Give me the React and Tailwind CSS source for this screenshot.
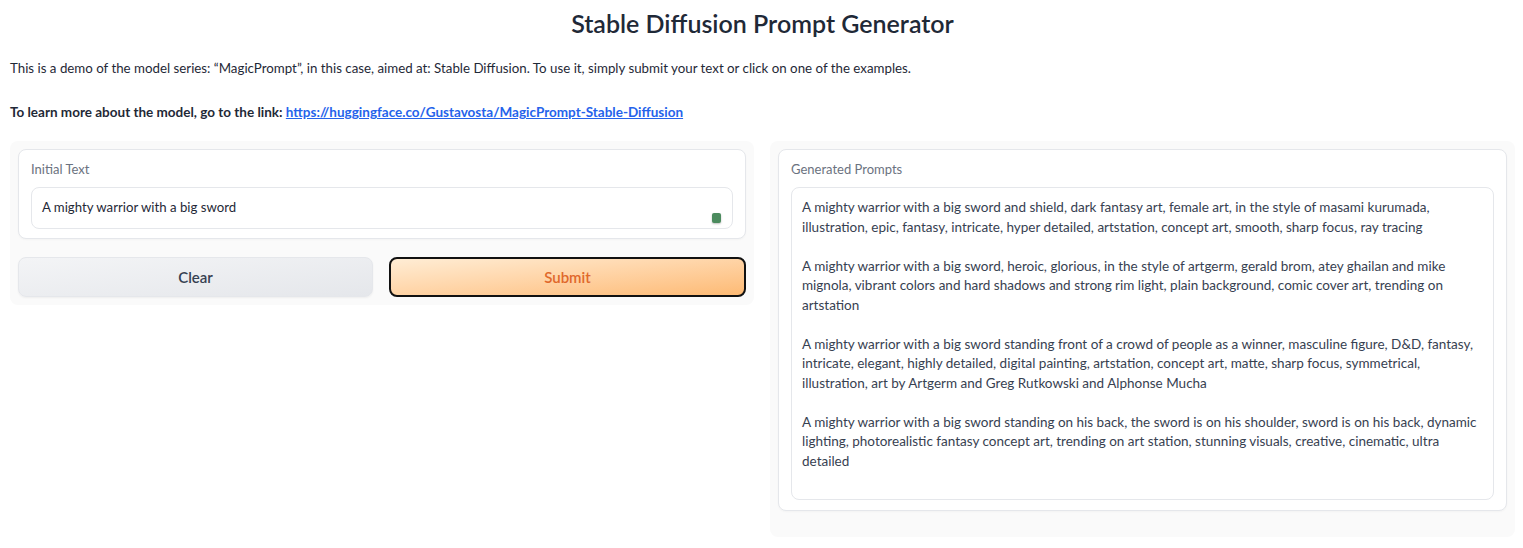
import { useState } from "react";

const prompts = [
  "A mighty warrior with a big sword and shield, dark fantasy art, female art, in the style of masami kurumada,\nillustration, epic, fantasy, intricate, hyper detailed, artstation, concept art, smooth, sharp focus, ray tracing",
  "A mighty warrior with a big sword, heroic, glorious, in the style of artgerm, gerald brom, atey ghailan and mike\nmignola, vibrant colors and hard shadows and strong rim light, plain background, comic cover art, trending on\nartstation",
  "A mighty warrior with a big sword standing front of a crowd of people as a winner, masculine figure, D&D, fantasy,\nintricate, elegant, highly detailed, digital painting, artstation, concept art, matte, sharp focus, symmetrical,\nillustration, art by Artgerm and Greg Rutkowski and Alphonse Mucha",
  "A mighty warrior with a big sword standing on his back, the sword is on his shoulder, sword is on his back, dynamic\nlighting, photorealistic fantasy concept art, trending on art station, stunning visuals, creative, cinematic, ultra\ndetailed",
];

const App = () => {
  const [text, setText] = useState("A mighty warrior with a big sword");

  return (
    <div className="min-h-[548px] bg-white pl-[10px] pr-[8px] font-['Lato',sans-serif] text-[#1f2937]">
      <h1 className="pt-[8px] text-center text-[25px] font-semibold leading-[30px] text-[#1f2937]">
        Stable Diffusion Prompt Generator
      </h1>
      <p className="mt-[20px] text-[13.3px] leading-[20px] text-[#1f2937]">
        This is a demo of the model series: “MagicPrompt”, in this case, aimed at: Stable Diffusion. To use it, simply submit your text or click on one of the examples.
      </p>
      <p className="mt-[24px] text-[13.5px] font-bold leading-[20px] text-[#1f2937]">
        To learn more about the model, go to the link:{" "}
        <a href="#" className="text-[#2563eb] underline">
          https://huggingface.co/Gustavosta/MagicPrompt-Stable-Diffusion
        </a>
      </p>

      <div className="mt-[19px] flex items-start gap-[16px]">
        <div className="flex w-[744px] shrink-0 flex-col gap-[18px] rounded-lg bg-[#fafafa] p-[8px]">
          <div className="rounded-lg border border-[#e5e7eb] bg-white px-[12px] pt-[9px] pb-[9px] shadow-[0_1px_2px_rgba(0,0,0,0.03)]">
            <div className="text-[13px] leading-[20px] text-[#6b7280]">Initial Text</div>
            <div className="relative mt-[8px] rounded-lg border border-[#e5e7eb] bg-white">
              <textarea
                value={text}
                onChange={(e) => setText(e.target.value)}
                rows={1}
                className="block h-[40px] w-full resize-none bg-transparent px-[10px] py-[9px] text-[13.2px] leading-[20px] text-[#1f2937] outline-none"
              />
              <span className="absolute right-[11px] bottom-[5px] h-[10px] w-[9px] rounded-[2px] bg-[#4b8b5e] shadow-[0_1px_2px_rgba(0,0,0,0.25)]" />
            </div>
          </div>
          <div className="flex gap-[16px]">
            <button className="h-[40px] flex-1 rounded-lg border border-[#e5e7eb] bg-gradient-to-br from-[#f3f4f6] to-[#e5e7eb] text-[15px] font-semibold text-[#374151] shadow-[0_1px_2px_rgba(0,0,0,0.05)]">
              Clear
            </button>
            <button className="h-[40px] flex-1 rounded-lg border-2 border-[#111111] bg-gradient-to-br from-[#ffedd5] to-[#fdba74] text-[15px] font-semibold text-[#e0682b]">
              Submit
            </button>
          </div>
        </div>

        <div className="min-w-0 flex-1 rounded-lg bg-[#fafafa] px-[8px] pt-[8px] pb-[26px]">
          <div className="rounded-lg border border-[#e5e7eb] bg-white px-[12px] pt-[9px] pb-[10px] shadow-[0_1px_2px_rgba(0,0,0,0.03)]">
            <div className="text-[13px] leading-[20px] text-[#6b7280]">Generated Prompts</div>
            <div className="mt-[8px] h-[313px] rounded-lg border border-[#e5e7eb] bg-white px-[10px] pt-[10px]">
              <div className="whitespace-pre text-[13.5px] leading-[19.5px] text-[#374151]">
                {prompts.join("\n\n")}
              </div>
            </div>
          </div>
        </div>
      </div>
    </div>
  );
};

export default App;
